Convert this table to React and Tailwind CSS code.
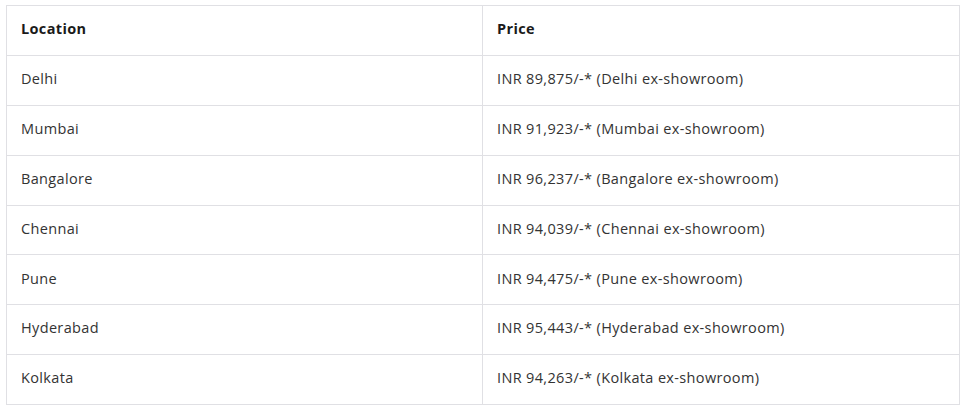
import React from 'react';

const rows = [
  ['Delhi', 'INR 89,875/-* (Delhi ex-showroom)'],
  ['Mumbai', 'INR 91,923/-* (Mumbai ex-showroom)'],
  ['Bangalore', 'INR 96,237/-* (Bangalore ex-showroom)'],
  ['Chennai', 'INR 94,039/-* (Chennai ex-showroom)'],
  ['Pune', 'INR 94,475/-* (Pune ex-showroom)'],
  ['Hyderabad', 'INR 95,443/-* (Hyderabad ex-showroom)'],
  ['Kolkata', 'INR 94,263/-* (Kolkata ex-showroom)'],
];

export default function App() {
  return (
    <div className="w-[967px] h-[410px] bg-white pt-[5px] pl-[6px] font-['Open_Sans',sans-serif]">
      <table className="w-[954px] border-collapse table-fixed text-[14.5px] tracking-[0.35px]">
        <colgroup>
          <col className="w-[476px]" />
          <col />
        </colgroup>
        <thead>
          <tr className="h-[49.9px]">
            <th className="border border-[#e0e0e4] text-left font-bold text-[#1a1a1a] px-[14px] pb-[3px]">Location</th>
            <th className="border border-[#e0e0e4] text-left font-bold text-[#1a1a1a] px-[14px] pb-[3px]">Price</th>
          </tr>
        </thead>
        <tbody>
          {rows.map(([loc, price]) => (
            <tr key={loc} className="h-[49.9px]">
              <td className="border border-[#e0e0e4] text-[#333] px-[14px] pb-[3px]">{loc}</td>
              <td className="border border-[#e0e0e4] text-[#333] px-[14px] pb-[3px]">{price}</td>
            </tr>
          ))}
        </tbody>
      </table>
    </div>
  );
}
